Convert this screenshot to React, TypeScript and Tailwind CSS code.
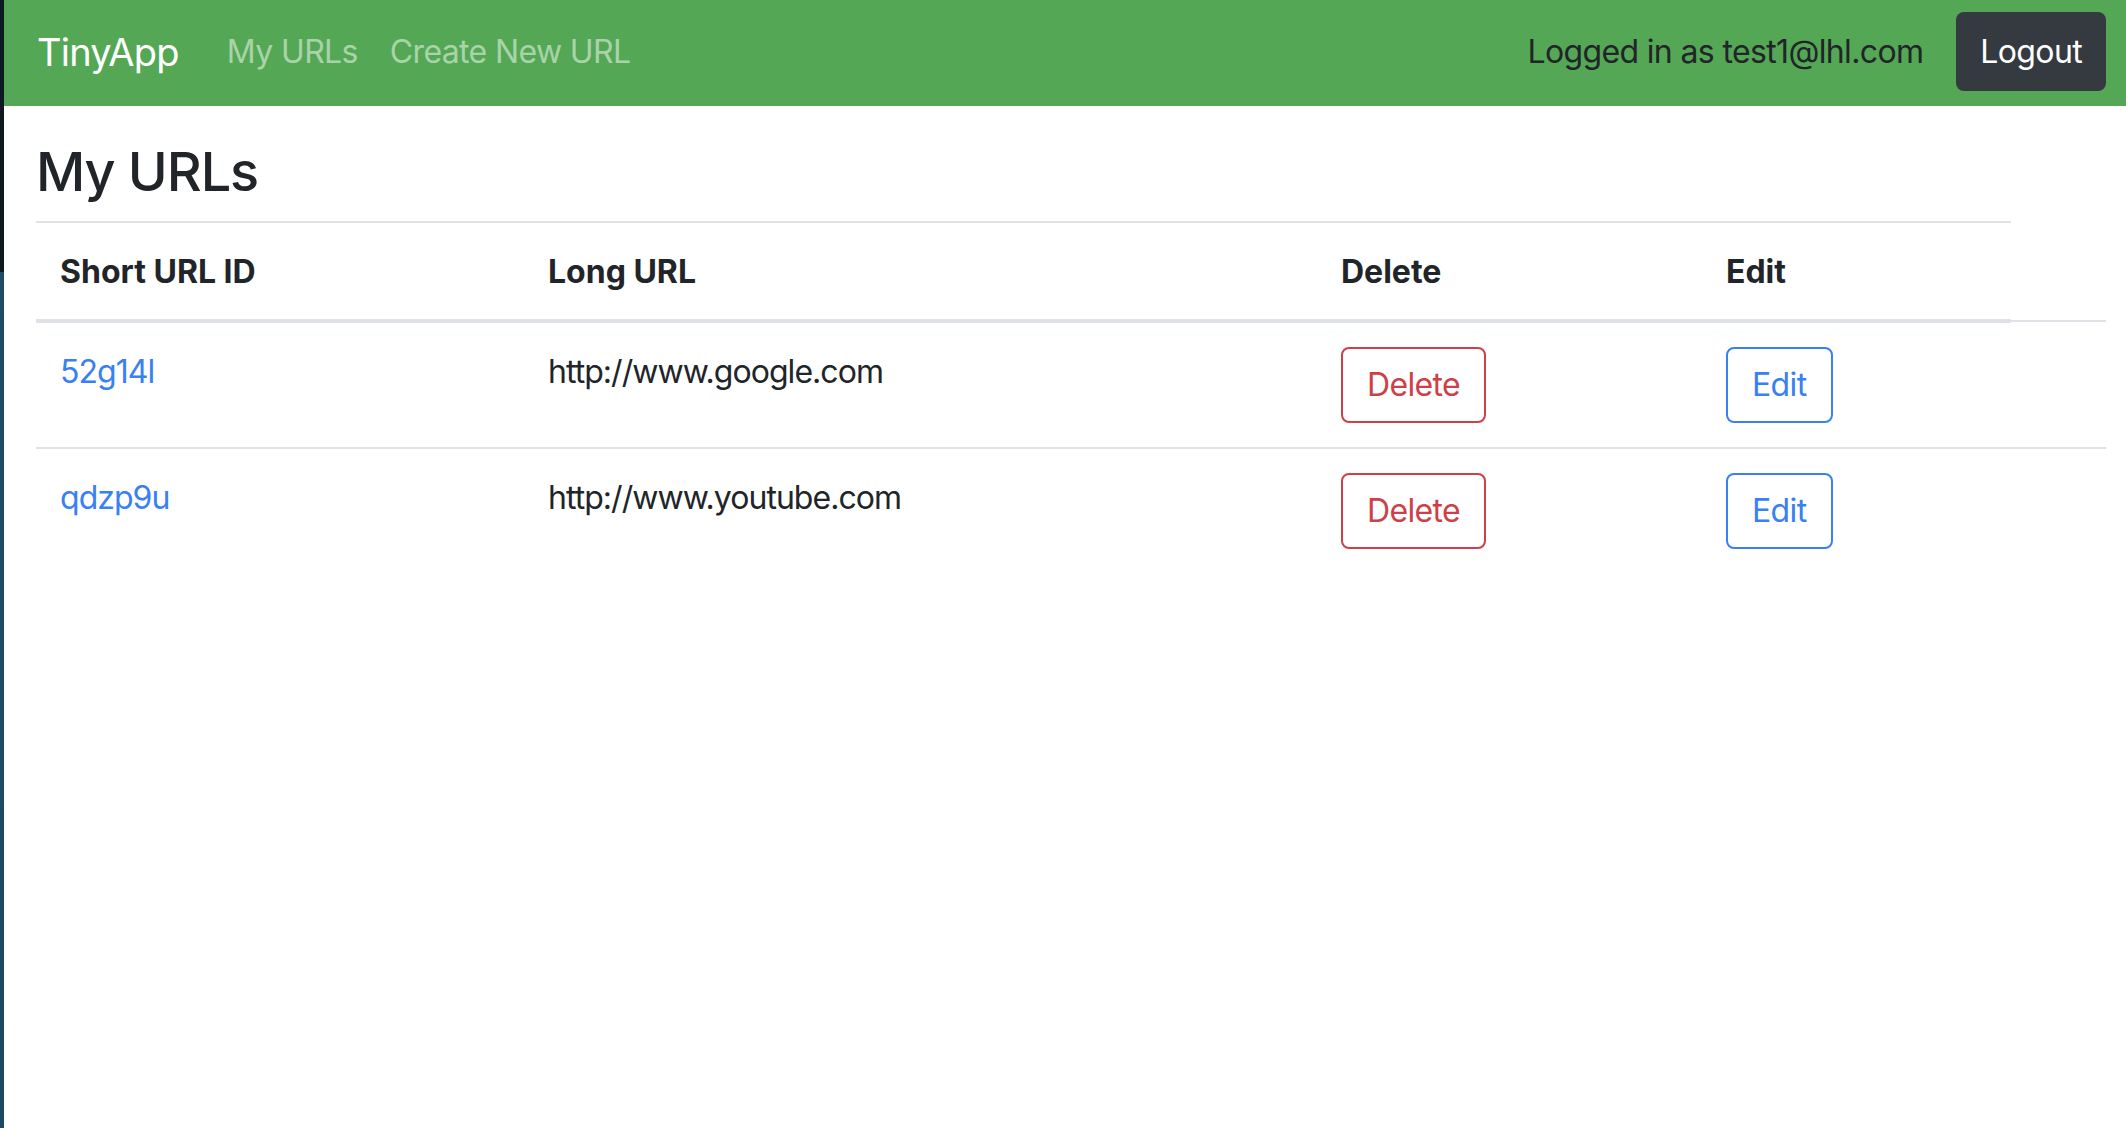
import React from "react";

const rows = [
  { id: "52g14l", url: "http://www.google.com" },
  { id: "qdzp9u", url: "http://www.youtube.com" },
];

export default function App() {
  return (
    <div
      className="min-h-screen w-full flex bg-white text-[#212529]"
      style={{ fontFamily: 'Inter, "Noto Sans", "Liberation Sans", sans-serif' }}
    >
      <div className="w-[4px] shrink-0 bg-[linear-gradient(to_bottom,#0e1822_0px,#0e1822_272px,#1f4b68_272px,#1c4862_100%)]" />
      <div className="flex-1 min-w-0">
        <nav className="h-[106px] bg-[#54a754] flex items-center pl-[33px] pr-[20px] pb-[3px]">
          <a href="#" className="text-[38px] leading-[60px] text-white mr-[32px] tracking-[-0.02em]">
            TinyApp
          </a>
          <a href="#" className="px-[16px] text-[32px] leading-[48px] text-white/50 tracking-[-0.02em]">
            My URLs
          </a>
          <a href="#" className="px-[16px] text-[32px] leading-[48px] text-white/50 tracking-[-0.02em]">
            Create New URL
          </a>
          <div className="ml-auto flex items-center">
            <span className="text-[32px] leading-[48px] text-[#212529] mr-[33px] tracking-[-0.02em]">
              Logged in as test1@lhl.com
            </span>
            <button className="h-[79px] px-[24px] rounded-[8px] bg-[#343a40] text-white text-[32px] leading-[48px] tracking-[-0.02em]">
              Logout
            </button>
          </div>
        </nav>
        <main className="pl-[32px] pt-[32px]">
          <h3 className="text-[54px] leading-[67px] font-medium mb-[16px] tracking-[-0.02em]">My URLs</h3>
          <table className="table-fixed border-collapse w-[2070px] text-[32px] leading-[48px]">
            <colgroup>
              <col className="w-[488px]" />
              <col className="w-[793px]" />
              <col className="w-[385px]" />
              <col className="w-[309px]" />
              <col className="w-[95px]" />
            </colgroup>
            <thead>
              <tr>
                <th className="text-left align-bottom font-bold pt-[25px] pb-[23px] px-[24px] border-t-2 border-b-4 border-[#dee2e6]">Short URL ID</th>
                <th className="text-left align-bottom font-bold pt-[25px] pb-[23px] px-[24px] border-t-2 border-b-4 border-[#dee2e6]">Long URL</th>
                <th className="text-left align-bottom font-bold pt-[25px] pb-[23px] px-[24px] border-t-2 border-b-4 border-[#dee2e6]">Delete</th>
                <th className="text-left align-bottom font-bold pt-[25px] pb-[23px] px-[24px] border-t-2 border-b-4 border-[#dee2e6]">Edit</th>
              </tr>
            </thead>
            <tbody className="tracking-[-0.03em]">
              {rows.map((r) => (
                <tr key={r.id}>
                  <td className="align-top p-[24px] border-t-2 border-[#dee2e6]">
                    <a href="#" className="text-[#3880f4] inline-block pt-[1px]">{r.id}</a>
                  </td>
                  <td className="align-top p-[24px] border-t-2 border-[#dee2e6]">
                    <span className="inline-block pt-[1px]">{r.url}</span>
                  </td>
                  <td className="align-top p-[24px] border-t-2 border-[#dee2e6]">
                    <button className="h-[76px] px-[24px] border-2 border-[#cf3f47] rounded-[8px] text-[#cf3f47] tracking-[-0.02em]">
                      Delete
                    </button>
                  </td>
                  <td className="align-top p-[24px] border-t-2 border-[#dee2e6]">
                    <button className="h-[76px] px-[24px] border-2 border-[#3880f4] rounded-[8px] text-[#3880f4] tracking-[-0.02em]">
                      Edit
                    </button>
                  </td>
                  <td className="align-top p-[24px] border-t-2 border-[#dee2e6]"></td>
                </tr>
              ))}
            </tbody>
          </table>
        </main>
      </div>
    </div>
  );
}
